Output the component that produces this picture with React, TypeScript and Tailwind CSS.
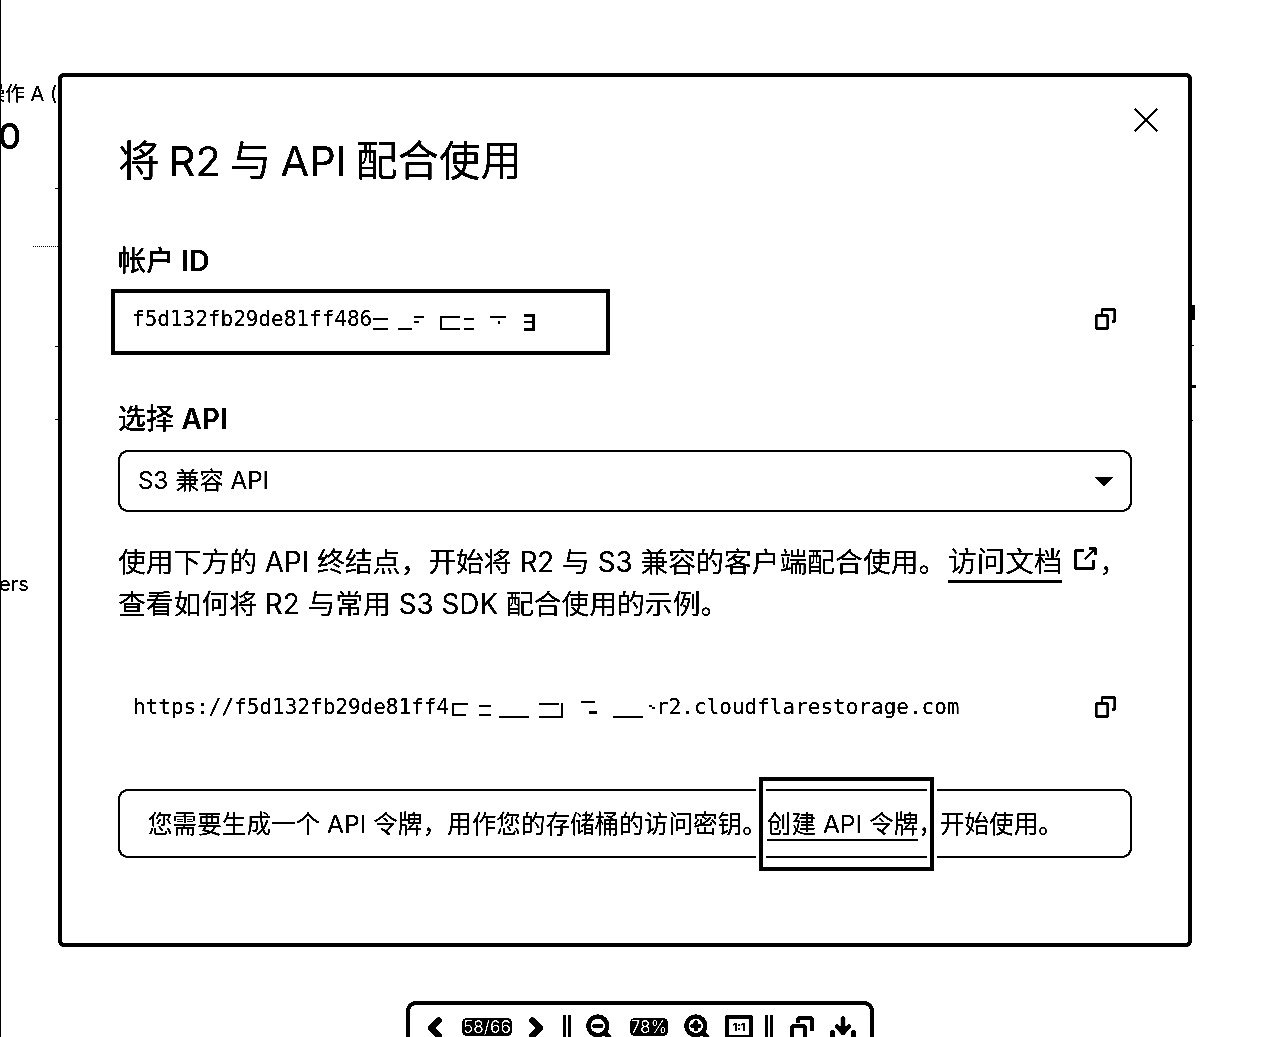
import React from 'react';
import { ChevronLeft, ChevronRight, Download, ZoomIn, ZoomOut } from 'lucide-react';

// leftovers of the blurred-out part of the ids, not text
const Smudge: React.FC<{ width: number; bits: number[][] }> = ({ width, bits }) => (
  <svg width={width} height={22} viewBox={`0 0 ${width} 22`} className="shrink-0">
    {bits.map(([x, y, w, h], i) => (
      <rect key={i} x={x} y={y} width={w} height={h} fill="#000" />
    ))}
  </svg>
);

const CopyIcon: React.FC<{ className: string }> = ({ className }) => (
  <svg width={21} height={22} viewBox="0 0 21 22" fill="none" stroke="#000" strokeWidth={2.4} className={className}>
    <rect x={1.2} y={7.2} width={11.6} height={13.6} rx={1.5} />
    <path d="M7 6V2.5a1.2 1.2 0 0 1 1.2-1.2H18.6a1.2 1.2 0 0 1 1.2 1.2V13.5" />
    <path d="M17 13.5h3" />
  </svg>
);

const Separator: React.FC<{ className: string }> = ({ className }) => (
  <div className={`flex gap-[2px] ${className}`}>
    <div className="mt-[2px] h-[24px] w-[3px] bg-black" />
    <div className="mt-[2px] h-[24px] w-[3px] bg-black" />
  </div>
);

const Pill: React.FC<{ text: string; className: string }> = ({ text, className }) => (
  <div className={`mt-[5px] flex h-[18px] shrink-0 items-center justify-center rounded-[5px] bg-black text-[17px] leading-none text-white ${className}`}>
    {text}
  </div>
);

const App: React.FC = () => {
  return (
    <div className="relative h-[1037px] w-[1280px] overflow-hidden bg-white font-['Inter','Noto_Sans_CJK_SC',sans-serif] text-black brightness-[0.8] contrast-[10] grayscale">
      {/* page behind the dialog */}
      <div className="flex h-full justify-between border-l border-black">
        <div className="w-[57px] overflow-hidden whitespace-nowrap">
          <p className="-ml-[16px] mt-[82px] text-[20px] leading-[24px]">操作 A (</p>
          <p className="-ml-[3px] mt-[10px] text-[36px] font-medium leading-[40px]">0</p>
          <div className="ml-[54px] mt-[32px] h-px w-[3px] bg-black" />
          <div className="ml-[32px] mt-[57px] w-[25px] border-t border-dotted border-black" />
          <div className="ml-[54px] mt-[99px] h-px w-[3px] bg-black" />
          <div className="ml-[54px] mt-[72px] h-px w-[3px] bg-black" />
          <p className="-ml-[2px] mt-[151px] text-[20px] leading-[26px]">ers</p>
        </div>
        <div className="w-[88px]">
          <div className="mt-[305px] h-[15px] w-[3px] bg-black" />
          <div className="mt-[25px] h-px w-[2px] bg-black" />
          <div className="mt-[39px] h-[3px] w-[4px] bg-black" />
          <div className="mt-[32px] h-px w-[1px] bg-black" />
        </div>
      </div>

      {/* dialog */}
      <div className="absolute left-[58px] top-[73px] w-[1134px] rounded-[6px] border-4 border-black bg-white pb-[85px] pl-[56px] pr-[56px] pt-[61px]">
        <button className="absolute right-[30px] top-[31px]">
          <svg width={24} height={24} viewBox="0 0 24 24" stroke="#000" strokeWidth={2.2} className="block">
            <path d="M1 1l22 22M23 1L1 23" />
          </svg>
        </button>

        <h2 className="text-[41.5px] font-normal leading-[46px] [word-spacing:-2.5px]">将 R2 与 API 配合使用</h2>

        <label className="mt-[59px] block text-[28px] font-medium leading-[36px]">
          帐户 <span className="font-semibold">ID</span>
        </label>
        <div className="mt-[10px] flex h-[66px] items-center justify-between pr-[16px]">
          <div className="-ml-[7px] flex h-full w-[499px] items-center border-4 border-black pb-[4px] pl-[17px] font-['DejaVu_Sans_Mono',monospace] text-[21px]">
            f5d132fb29de81ff486
            <Smudge
              width={163}
              bits={[
                [1, 9, 15, 2], [1, 19, 15, 2], [26, 19, 14, 2], [42, 7, 10, 2], [42, 12, 5, 2],
                [68, 7, 20, 2], [68, 19, 20, 2], [68, 7, 2, 14], [92, 9, 10, 2], [92, 19, 10, 2],
                [118, 7, 16, 2], [126, 12, 2, 3], [152, 5, 11, 3], [152, 19, 11, 3], [160, 5, 3, 17], [152, 12, 8, 2],
              ]}
            />
          </div>
          <CopyIcon className="mb-[7px]" />
        </div>

        <label className="mt-[46px] block text-[28px] font-medium leading-[36px]">
          选择 <span className="font-semibold">API</span>
        </label>
        <div className="mt-[13px] flex h-[62px] items-center justify-between rounded-[10px] border-2 border-black pl-[18px] pr-[17px] text-[24.2px]">
          <span>S3 兼容 API</span>
          <svg width={18} height={9} viewBox="0 0 18 9" className="block">
            <path d="M0 0h18L9 9z" fill="#000" />
          </svg>
        </div>

        <p className="mt-[29px] whitespace-nowrap text-[27.8px] leading-[42px]">
          使用下方的 API 终结点，开始将 R2 与 S3 兼容的客户端配合使用。
          <a className="ml-[2px] border-b-[3px] border-black pb-[1px] text-[28.5px]">访问文档</a>
          <svg width={23} height={23} viewBox="0 0 23 23" fill="none" stroke="#000" strokeWidth={2} className="ml-[12px] mr-[2px] inline-block align-[2px]">
            <path d="M10 3.5H1.5v18h18V13" />
            <path d="M11 12L21.5 1.5M15 1.5h6.5V8" />
          </svg>
          ，
          <br />
          查看如何将 R2 与常用 S3 SDK 配合使用的示例。
        </p>

        <div className="mt-[61px] flex h-[40px] items-center justify-between pl-[15px] pr-[16px]">
          <div className="flex items-center pt-[4px] font-['DejaVu_Sans_Mono',monospace] text-[21px]">
            https://f5d132fb29de81ff4
            <Smudge
              width={207}
              bits={[
                [3, 6, 16, 2], [3, 17, 14, 2], [3, 6, 2, 13], [30, 8, 12, 2], [30, 17, 12, 2], [50, 19, 30, 2],
                [90, 6, 20, 2], [90, 19, 22, 2], [112, 6, 2, 15], [132, 4, 14, 2], [140, 14, 8, 3],
                [164, 19, 30, 2], [200, 8, 3, 2], [203, 10, 3, 2],
              ]}
            />
            r2.cloudflarestorage.com
          </div>
          <CopyIcon className="mt-[2px]" />
        </div>

        <div className="mt-[63px] flex h-[69px] items-center whitespace-nowrap rounded-[10px] border-2 border-black pl-[28px] pt-[1px] text-[24.6px]">
          您需要生成一个 API 令牌，用作您的存储桶的访问密钥。
          <span className="relative tracking-[-3px]">
            {/* focus box from the screenshot */}
            <span className="pointer-events-none absolute -left-[8px] right-[6px] -top-[29px] -bottom-[29px] border-4 border-black ring-[3px] ring-white">
              <span className="block h-full w-full border-[3px] border-white" />
            </span>
            <a className="border-b-2 border-black tracking-normal">创建 API 令牌</a>，
          </span>
          <span>开始使用。</span>
        </div>
      </div>

      {/* pdf viewer toolbar */}
      <div className="absolute left-[406px] top-[1001px] flex h-[60px] w-[468px] items-start rounded-[10px] border-4 border-black bg-white pt-[8px] font-['Inter',sans-serif]">
        <ChevronLeft size={30} strokeWidth={5} className="ml-[10px] shrink-0" />
        <Pill text="58/66" className="ml-[12px] w-[50px]" />
        <ChevronRight size={30} strokeWidth={5} className="ml-[9px] shrink-0" />
        <Separator className="ml-[12px]" />
        <ZoomOut size={28} strokeWidth={3.6} className="ml-[14px] shrink-0" />
        <Pill text="78%" className="ml-[17px] w-[38px]" />
        <ZoomIn size={28} strokeWidth={3.6} className="ml-[15px] shrink-0" />
        <div className="ml-[14px] mt-[2px] flex h-[24px] w-[28px] shrink-0 items-center justify-center rounded-[2px] border-4 border-black text-[11px] font-bold leading-none">
          1:1
        </div>
        <Separator className="ml-[12px]" />
        <svg width={24} height={24} viewBox="0 0 24 24" fill="none" stroke="#000" strokeWidth={4} className="ml-[17px] mt-[3px] shrink-0">
          <rect x={2} y={10} width={13} height={14} rx={2} />
          <path d="M8 7V4a2 2 0 0 1 2-2h10a2 2 0 0 1 2 2v11" />
        </svg>
        <Download size={28} strokeWidth={4} className="ml-[15px] mt-[2px] shrink-0" />
      </div>
    </div>
  );
};

export default App;
